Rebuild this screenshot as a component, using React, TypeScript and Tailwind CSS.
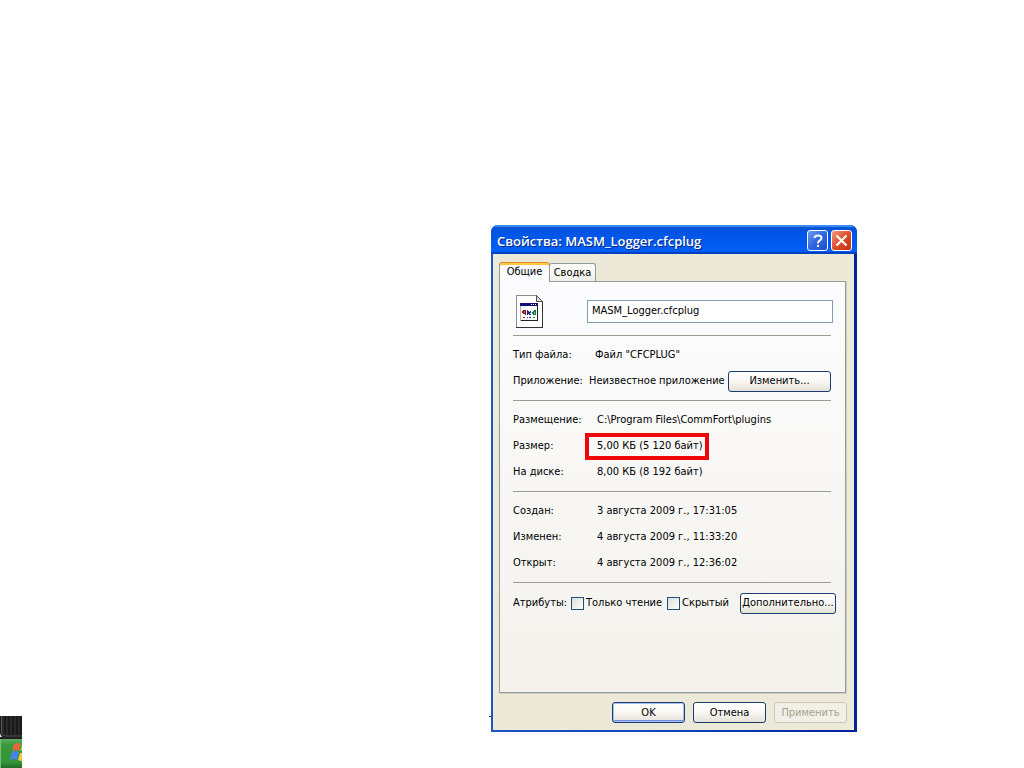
import React from "react";

const buttonBase =
  "flex shrink-0 items-center justify-center h-[21px] rounded-[3px] border whitespace-nowrap";
const buttonNormal =
  "border-[#1c3c6e] bg-linear-to-b from-white via-[#f8f7f3] to-[#e4e1d8] text-black";
const checkbox =
  "size-[13px] shrink-0 appearance-none border border-[#1c5180] bg-linear-to-br from-[#dcdcd7] to-white";

function Separator() {
  return <hr className="mr-[14px] border-0 border-t border-[#9c9c93]" />;
}

function Row({
  label,
  children,
  pad = "pl-[84px]",
}: {
  label: string;
  children: React.ReactNode;
  pad?: string;
}) {
  return (
    <div className="relative flex h-[26px] items-center">
      <dt className="absolute left-0">{label}</dt>
      <dd className={`flex flex-1 items-center ${pad}`}>{children}</dd>
    </div>
  );
}

function FileIcon() {
  return (
    <svg width="28" height="34" viewBox="0 0 28 34" shapeRendering="crispEdges" aria-hidden="true">
      <path d="M1 1h19l6 6v25H1z" fill="#fdfdfd" />
      <path d="M0 0h20v1H1v31H0z" fill="#8b8b8b" />
      <path d="M26 7h1v26H0v-1h26z" fill="#333" />
      <path d="M20 1l6 6h-6z" fill="#d8d8d8" />
      <path d="M20 0h1v1h1v1h1v1h1v1h1v1h1v1h1v1h-7V0z M21 2v4h4V5h-1V4h-1V3h-1V2z" fill="#555" fillRule="evenodd" />
      <rect x="4" y="8" width="18" height="18" fill="#b8b8b8" />
      <rect x="5" y="11" width="16" height="14" fill="#fff" />
      <rect x="4" y="8" width="18" height="3" fill="#10107c" />
      <path d="M15 9h1v1h-1zM17 9h1v1h-1zM19 9h1v1h-1z" fill="#fff" />
      <path d="M21 9h1v17H5v-1h16z" fill="#222" />
      <path d="M7 15h3v5H9v-1H7v-1H6v-2h1z" fill="#8c1018" />
      <path d="M8 16h1v2H8z" fill="#f06070" />
      <path d="M11 15h1v1h1v1h1v-1h1v2h-1v1h1v1h-2v-1h-1v1h-1z" fill="#20208c" />
      <path d="M17 16h1v-1h2v5h-3v-1h-1v-2h1z" fill="#107c38" />
      <path d="M18 17h1v2h-1z" fill="#60d888" />
      <path d="M7 22h2v1H7z" fill="#d02020" />
      <path d="M11 22h1v1h-1zM13 22h2v1h-2z" fill="#2030b0" />
      <path d="M17 22h2v1h-2z" fill="#109040" />
    </svg>
  );
}

function TaskbarCorner() {
  return (
    <svg
      className="absolute bottom-0 left-0"
      width="22"
      height="52"
      viewBox="0 0 22 52"
      aria-hidden="true"
    >
      <defs>
        <linearGradient id="start" x1="0" y1="0" x2="0" y2="1">
          <stop offset="0" stopColor="#5fae62" />
          <stop offset="0.2" stopColor="#379a3b" />
          <stop offset="0.8" stopColor="#35963a" />
          <stop offset="1" stopColor="#1f6c25" />
        </linearGradient>
      </defs>
      <rect width="22" height="22" fill="#1a1a1a" />
      <path d="M3 0v18M7 0v19M11 0v19M15 0v19M19 0v19" stroke="#303030" strokeWidth="1.5" />
      <path d="M1.500 0v16q0 4 4 4H22" fill="none" stroke="#555" />
      <path d="M0 17q1 4 4 5H0z" fill="#dce4f4" />
      <rect y="21" width="22" height="2" fill="#222" />
      <rect y="23" width="22" height="29" fill="url(#start)" />
      <path d="M0 23v29h1V23z" fill="#75bf70" />
      <path d="M14 28q4-2 7 0l-2 7q-3-2-7 0z" fill="#e8673a" />
      <path d="M22 28v7l-2 0z" fill="#8fd14f" />
      <path d="M12 36q4-2 7 0l-2 8q-3-2-7 0z" fill="#4a83e8" />
      <path d="M20 37h2v8q-2 0-4-1z" fill="#f5c93a" />
    </svg>
  );
}

export default function App() {
  return (
    <main className="relative min-h-screen overflow-hidden bg-white font-['DejaVu_Sans_Condensed','DejaVu_Sans',sans-serif] text-[11px] leading-[14px] text-black">
      <TaskbarCorner />
      <div className="absolute left-[489px] top-[716px] h-px w-[3px] bg-[#23416f]" />

      <section
        aria-label="Свойства: MASM_Logger.cfcplug"
        className="absolute left-[491px] top-[225px] flex w-[366px] flex-col overflow-hidden rounded-t-[7px] bg-linear-to-r from-[#1c56c0] via-[#1243b8] to-[#00209c]"
      >
        <header className="flex h-[29px] items-center gap-[3px] bg-linear-to-b from-[#0a50c8] from-0% via-[#0054e4] via-25% to-[#0060fa] pl-[6px] pr-[5px] shadow-[inset_0_2px_1px_#3c8cf8,inset_0_-2px_1px_#0040c0]">
          <h1 className="flex-1 whitespace-nowrap pt-[3px] font-['Open_Sans','Noto_Sans',sans-serif] text-[13px] font-semibold text-white [text-shadow:1px_1px_0_#0a2a80]">
            Свойства: MASM_Logger.cfcplug
          </h1>
          <button
            type="button"
            aria-label="Справка"
            className="mt-[2px] flex size-[21px] items-center justify-center rounded-[3px] border border-white bg-linear-to-br from-[#6c9cf4] via-[#2f66e0] to-[#1c50cc]"
          >
            <svg width="12" height="14" viewBox="0 0 12 14" fill="none" stroke="#fff" strokeWidth="2" aria-hidden="true">
              <path d="M2.500 4Q2.500 1.500 6 1.500Q9.500 1.500 9.500 4Q9.500 5.600 7.500 6.600Q6 7.500 6 9.500M6 11v2" />
            </svg>
          </button>
          <button
            type="button"
            aria-label="Закрыть"
            className="mt-[2px] flex size-[21px] items-center justify-center rounded-[3px] border border-white bg-linear-to-br from-[#f0967c] via-[#dc4f2c] to-[#c0300c]"
          >
            <svg width="13" height="13" viewBox="0 0 13 13" stroke="#fff" strokeWidth="2" aria-hidden="true">
              <path d="M1.500 1.500l10 10M11.500 1.500l-10 10" />
            </svg>
          </button>
        </header>

        <div className="mb-[2px] ml-[2px] mr-[3px] flex flex-col bg-[#ece9d8] px-[8px] pb-[7px] pl-[6px] pt-[8px]">
          <div role="tablist" className="relative flex items-end">
            <button
              type="button"
              role="tab"
              aria-selected="true"
              className="relative z-10 -mb-px h-[20px] w-[51px] overflow-hidden rounded-t-[3px] border border-b-0 border-[#919b9c] border-t-[#e68b2c] bg-[#fcfcfe] pb-[2px] shadow-[inset_0_2px_0_#ffc73c]"
            >
              Общие
            </button>
            <button
              type="button"
              role="tab"
              aria-selected="false"
              className="-ml-px h-[18px] w-[47px] rounded-t-[3px] border border-b-0 border-[#919b9c] bg-linear-to-b from-white to-[#f0f0ea]"
            >
              Сводка
            </button>
          </div>

          <div
            role="tabpanel"
            className="flex h-[412px] flex-col border border-[#919b9c] bg-linear-to-b from-[#fcfcfe] to-[#f3f2ec] pl-[13px] shadow-[1px_1px_0_#d0cebf]"
          >
            <div className="flex h-[53px] items-center justify-between pl-[3px] pr-[12px] pt-[6px]">
              <FileIcon />
              <input
                aria-label="Имя файла"
                defaultValue="MASM_Logger.cfcplug"
                className="h-[23px] w-[246px] border border-[#7f9db9] bg-white px-[4px] pb-[2px]"
              />
            </div>
            <Separator />
            <dl className="my-[6px]">
              <Row label="Тип файла:" pad="pl-[82px]">
                Файл "CFCPLUG"
              </Row>
              <Row label="Приложение:" pad="pl-[76px] pr-[14px] justify-between">
                <span className="whitespace-nowrap">Неизвестное приложение</span>
                <button type="button" className={`${buttonBase} ${buttonNormal} w-[103px]`}>
                  Изменить...
                </button>
              </Row>
            </dl>
            <Separator />
            <dl className="my-[6px]">
              <Row label="Размещение:">C:\Program Files\CommFort\plugins</Row>
              <Row label="Размер:">
                <span className="relative">
                  5,00 КБ (5 120 байт)
                  <span className="absolute -left-[12px] -top-[6px] h-[27px] w-[124px] border-4 border-[#ee0808]" />
                </span>
              </Row>
              <Row label="На диске:">8,00 КБ (8 192 байт)</Row>
            </dl>
            <Separator />
            <dl className="my-[6px]">
              <Row label="Создан:">3 августа 2009 г., 17:31:05</Row>
              <Row label="Изменен:">4 августа 2009 г., 11:33:20</Row>
              <Row label="Открыт:">4 августа 2009 г., 12:36:02</Row>
            </dl>
            <Separator />
            <div className="mt-[7px] flex h-[26px] items-center pr-[9px]">
              <span className="w-[58px] whitespace-nowrap">Атрибуты:</span>
              <label className="flex w-[96px] items-center gap-[2px] whitespace-nowrap">
                <input type="checkbox" className={checkbox} />
                Только чтение
              </label>
              <label className="flex items-center gap-[2px] whitespace-nowrap">
                <input type="checkbox" className={checkbox} />
                Скрытый
              </label>
              <button type="button" className={`${buttonBase} ${buttonNormal} ml-auto w-[96px]`}>
                Дополнительно...
              </button>
            </div>
          </div>

          <footer className="-mr-px mt-[9px] flex justify-end gap-[8px]">
            <button
              type="button"
              className={`${buttonBase} ${buttonNormal} w-[73px] shadow-[inset_0_0_0_1px_#a6c0f0,inset_0_-2px_0_#6d8fdd]`}
            >
              OK
            </button>
            <button type="button" className={`${buttonBase} ${buttonNormal} w-[73px]`}>
              Отмена
            </button>
            <button
              type="button"
              disabled
              className={`${buttonBase} w-[73px] border-[#c9c7ba] bg-[#f2f0e6] text-[#a5a294]`}
            >
              Применить
            </button>
          </footer>
        </div>
      </section>
    </main>
  );
}
